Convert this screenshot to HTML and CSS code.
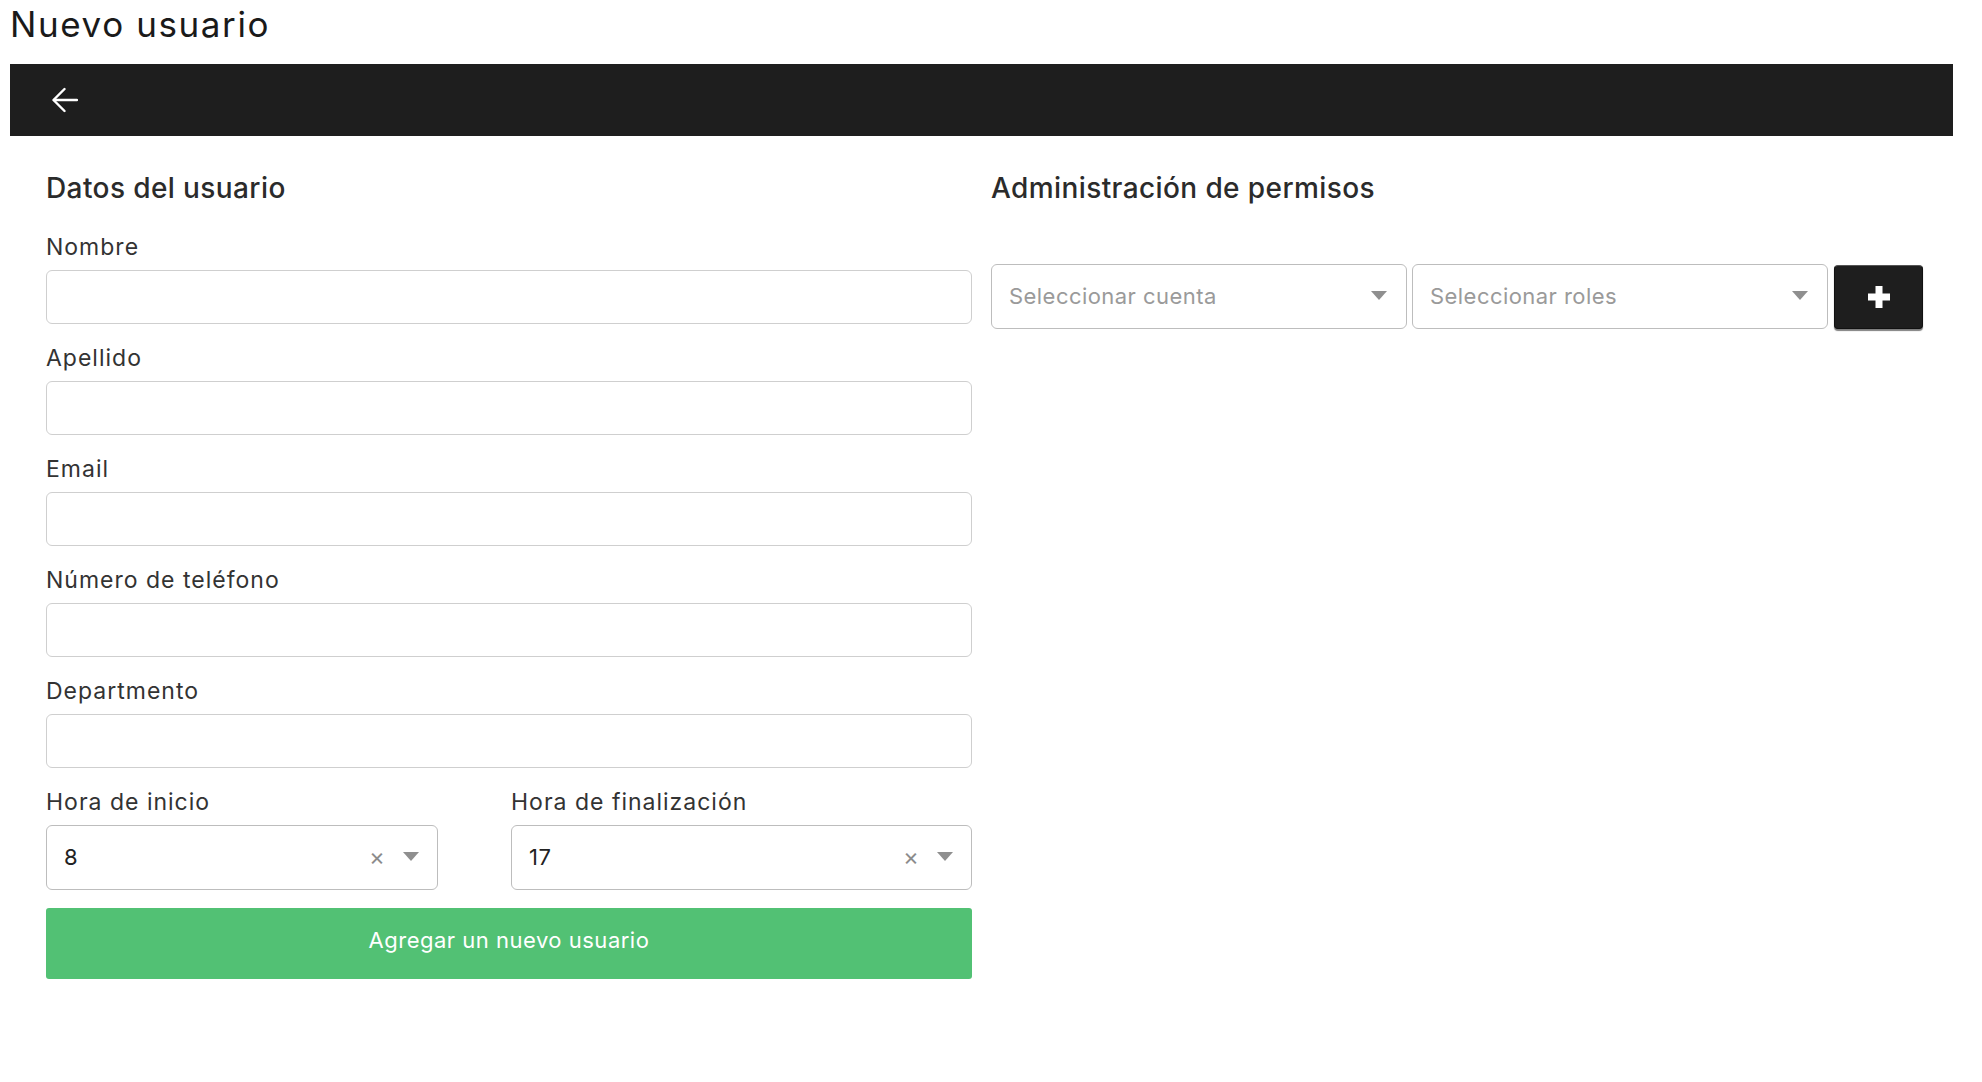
FILE: index.html
```html
<!DOCTYPE html>
<html lang="es">
<head>
    <meta charset="UTF-8">
    <meta name="viewport" content="width=device-width, initial-scale=1.0">
    <title>Nuevo usuario</title>
    <link rel="stylesheet" href="styles.css">
</head>
<body>
    <h1 class="page-title">Nuevo usuario</h1>

    <div class="toolbar">
        <button class="back-btn" aria-label="Volver">
            <svg width="26" height="26" viewBox="0 0 26 26" fill="none" stroke="#fff" stroke-width="2.4" stroke-linecap="round" stroke-linejoin="round">
                <path d="M25 13H2"/>
                <path d="M12.5 2L1.5 13l11 11"/>
            </svg>
        </button>
    </div>

    <div class="content">
        <section class="user-data">
            <h2 class="section-title">Datos del usuario</h2>

            <div class="field">
                <label for="nombre">Nombre</label>
                <input type="text" id="nombre">
            </div>
            <div class="field">
                <label for="apellido">Apellido</label>
                <input type="text" id="apellido">
            </div>
            <div class="field">
                <label for="email">Email</label>
                <input type="email" id="email">
            </div>
            <div class="field">
                <label for="telefono">Número de teléfono</label>
                <input type="tel" id="telefono">
            </div>
            <div class="field">
                <label for="departamento">Departmento</label>
                <input type="text" id="departamento">
            </div>

            <div class="time-row">
                <div class="field">
                    <label>Hora de inicio</label>
                    <div class="select">
                        <span class="select-value">8</span>
                        <span class="select-clear">×</span>
                        <span class="select-arrow"></span>
                    </div>
                </div>
                <div class="field">
                    <label>Hora de finalización</label>
                    <div class="select">
                        <span class="select-value">17</span>
                        <span class="select-clear">×</span>
                        <span class="select-arrow"></span>
                    </div>
                </div>
            </div>

            <button class="submit-btn">Agregar un nuevo usuario</button>
        </section>

        <section class="permissions">
            <h2 class="section-title">Administración de permisos</h2>

            <div class="perm-row">
                <div class="select">
                    <span class="select-value placeholder">Seleccionar cuenta</span>
                    <span class="select-arrow"></span>
                </div>
                <div class="select">
                    <span class="select-value placeholder">Seleccionar roles</span>
                    <span class="select-arrow"></span>
                </div>
                <button class="add-btn" aria-label="Agregar">
                    <svg width="22" height="22" viewBox="0 0 22 22" fill="#fff">
                        <rect x="7.5" y="0" width="7" height="22"/>
                        <rect x="0" y="7.5" width="22" height="7"/>
                    </svg>
                </button>
            </div>
        </section>
    </div>
</body>
</html>
```

FILE: styles.css
```css
* {
    box-sizing: border-box;
    margin: 0;
}

body {
    padding: 0 29px 0 10px;
    font-family: 'Inter', 'Noto Sans', sans-serif;
    color: #2b2b2b;
    background-color: #fff;
}

.page-title {
    font-size: 35px;
    font-weight: 400;
    line-height: 48px;
    letter-spacing: 1.6px;
    color: #1a1a1a;
    margin-bottom: 16px;
}

.toolbar {
    height: 72px;
    background-color: #1e1e1e;
    display: flex;
    align-items: center;
    padding-left: 42px;
}

.back-btn {
    background: none;
    border: none;
    padding: 0;
    display: flex;
    cursor: pointer;
}

.content {
    display: grid;
    grid-template-columns: 926px 932px;
    gap: 19px;
    padding: 35px 0 0 36px;
}

.section-title {
    font-size: 28px;
    font-weight: 500;
    line-height: 34px;
    letter-spacing: 0.4px;
    margin-bottom: 28px;
    color: #2b2b2b;
}

.field {
    display: flex;
    flex-direction: column;
    margin-bottom: 20px;
}

.field label {
    font-size: 23px;
    line-height: 28px;
    letter-spacing: 1px;
    margin-bottom: 9px;
    color: #333;
}

.field input {
    height: 54px;
    border: 1px solid #cfcfcf;
    border-radius: 6px;
    padding: 0 16px;
    font-size: 22px;
    font-family: inherit;
}

.time-row {
    display: grid;
    grid-template-columns: 392px 1fr;
    gap: 73px;
}

.time-row .field {
    margin-bottom: 18px;
}

.select {
    height: 65px;
    border: 1px solid #bdbdbd;
    border-radius: 6px;
    display: flex;
    align-items: center;
    padding: 0 18px 2px 17px;
    background-color: #fff;
}

.select-value {
    flex: 1;
    font-size: 22px;
    letter-spacing: 0.45px;
    color: #222;
}

.select-value.placeholder {
    color: #9a9a9a;
}

.select-clear {
    font-size: 24px;
    color: #8c8c8c;
    margin-right: 18px;
    line-height: 1;
}

.select-arrow {
    width: 0;
    height: 0;
    border-left: 8.5px solid transparent;
    border-right: 8.5px solid transparent;
    border-top: 9px solid #8f8f8f;
}

.submit-btn {
    width: 100%;
    height: 71px;
    border: none;
    border-radius: 3px;
    background-color: #52c174;
    color: #fff;
    font-family: inherit;
    font-size: 22px;
    letter-spacing: 0.5px;
    padding-bottom: 8px;
    cursor: pointer;
}

.perm-row {
    display: flex;
    gap: 5px;
    margin-top: 59px;
}

.perm-row .select {
    flex: 1;
    padding-right: 19px;
}

.add-btn {
    width: 89px;
    height: 64px;
    margin-left: 1px;
    margin-top: 1px;
    background-color: #1e1e1e;
    border: 1px solid #111;
    border-top-color: #555;
    border-radius: 4px;
    box-shadow: 0 2px 1px rgba(0, 0, 0, 0.5);
    display: flex;
    align-items: center;
    justify-content: center;
    cursor: pointer;
}
```
